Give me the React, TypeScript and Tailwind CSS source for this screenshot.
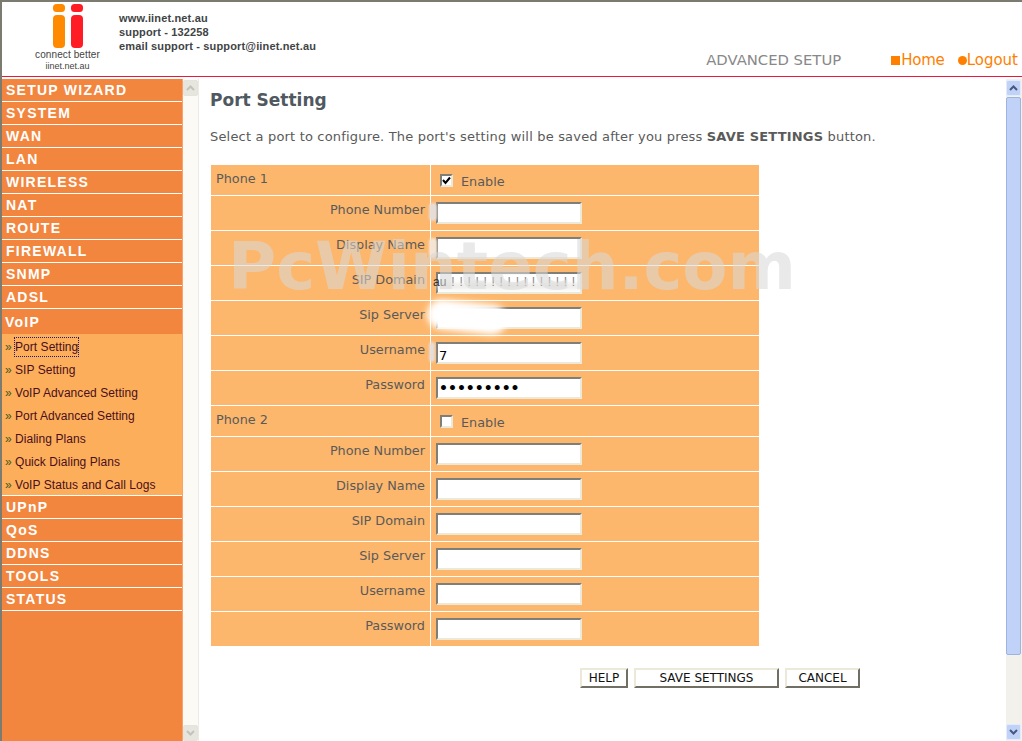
import React from 'react';

const MENU_TOP = ['SETUP WIZARD', 'SYSTEM', 'WAN', 'LAN', 'WIRELESS', 'NAT', 'ROUTE', 'FIREWALL', 'SNMP', 'ADSL'];
const MENU_BOTTOM = ['UPnP', 'QoS', 'DDNS', 'TOOLS', 'STATUS'];
const SUB_MENU = ['Port Setting', 'SIP Setting', 'VoIP Advanced Setting', 'Port Advanced Setting', 'Dialing Plans', 'Quick Dialing Plans', 'VoIP Status and Call Logs'];
const FIELDS = ['Phone Number', 'Display Name', 'SIP Domain', 'Sip Server', 'Username', 'Password'];

const inputClass =
  'block h-[22px] w-[146px] border-2 border-t-[#7f7f78] border-l-[#7f7f78] border-r-[#ece9d8] border-b-[#ece9d8] bg-white px-px text-black outline-none';

function MenuItem({ label }: { label: string }) {
  return (
    <div className="flex h-[23px] items-center border-b border-white pl-1 font-['Liberation_Sans',sans-serif] text-[14px] font-bold tracking-[1.25px] text-white">
      {label}
    </div>
  );
}

function FieldRow({ label, value, type = 'text' }: { label: string; value?: string; type?: string }) {
  return (
    <div className="flex h-[35px] border-b border-white">
      <div className="w-[220px] border-r border-white pr-[5px] pt-[5px] text-right leading-[17px]">{label}</div>
      <div className="pl-[5px] pt-[6px]">
        <input
          className={`${inputClass} ${type === 'password' ? 'text-[14px] font-bold' : 'pt-[5px] text-[13px]'}`}
          type={type}
          value={value ?? ''}
          readOnly
        />
      </div>
    </div>
  );
}

function PhoneHeader({ label, checked }: { label: string; checked: boolean }) {
  return (
    <div className="flex h-[31px] border-b border-white">
      <div className="w-[220px] border-r border-white pl-[5px] pt-[5px] leading-[17px]">{label}</div>
      <div className="flex items-start gap-[8px] pl-[9px] pt-[8px] leading-[17px]">
        <span className="mt-px flex h-[13px] w-[13px] items-center justify-center border-2 border-t-[#7f7f78] border-l-[#7f7f78] border-r-[#ece9d8] border-b-[#ece9d8] bg-white">
          {checked && (
            <svg width="9" height="9" viewBox="0 0 9 9">
              <path d="M1 4 L3.5 7 L8 1.5" fill="none" stroke="#000" strokeWidth="2" />
            </svg>
          )}
        </span>
        <span>Enable</span>
      </div>
    </div>
  );
}

function ScrollButton({ up, blue }: { up: boolean; blue: boolean }) {
  return (
    <div
      className={`flex h-[16px] w-[15px] items-center justify-center rounded-[2px] border ${
        blue ? 'border-[#e4ecfb] bg-[#c0d2f7]' : 'border-[#e4e3dc] bg-[#e6e5de]'
      }`}
    >
      <svg width="9" height="6" viewBox="0 0 9 6">
        <path
          d={up ? 'M1 5 L4.5 1.5 L8 5' : 'M1 1 L4.5 4.5 L8 1'}
          fill="none"
          stroke={blue ? '#47587f' : '#c4c3bb'}
          strokeWidth="2"
        />
      </svg>
    </div>
  );
}

function Logo() {
  return (
    <svg width="32" height="44" viewBox="0 0 32 44" className="block">
      <rect x="1" y="0" width="12" height="8" rx="3.5" fill="#ff8a00" />
      <rect x="1" y="11" width="12" height="33" rx="4" fill="#ff8a00" />
      <rect x="19" y="0" width="12" height="8" rx="3.5" fill="#ff1c24" />
      <rect x="19" y="11" width="12" height="33" rx="4" fill="#ff1c24" />
    </svg>
  );
}

export default function App() {
  return (
    <div className="flex h-[741px] w-[1022px] flex-col overflow-hidden border-t-2 border-l-2 border-[#7b7b6f] bg-white font-['DejaVu_Sans',sans-serif]">
      {/* Header */}
      <header className="flex h-[75px] shrink-0 border-b border-[#e8193c]">
        <div className="flex w-[117px] flex-col items-center pl-[14px] pt-[2px] font-['Liberation_Sans',sans-serif] text-[#444]">
          <Logo />
          <div className="text-[10px] leading-[13px] tracking-[0.1px]">connect better</div>
          <div className="text-[9px] leading-[11px]">iinet.net.au</div>
        </div>
        <div className="pt-[9px] font-['Liberation_Sans',sans-serif] text-[11px] font-bold leading-[14px] tracking-[0.15px] text-[#3f4445]">
          <div>www.iinet.net.au</div>
          <div>support - 132258</div>
          <div>email support - support@iinet.net.au</div>
        </div>
        <div className="ml-auto flex items-end gap-[13px] pb-[7px] pr-[4px] text-[15px] leading-[18px] text-[#ff8000]">
          <span className="mr-[37px] text-[14.8px] text-[#888]">ADVANCED SETUP</span>
          <span className="flex items-center tracking-[-0.2px]">
            <span className="mr-px h-[9px] w-[9px] bg-[#ff8000]" />
            Home
          </span>
          <span className="flex items-center">
            <span className="h-[9px] w-[9px] rounded-full bg-[#ff8000]" />
            Logout
          </span>
        </div>
      </header>

      <div className="mt-[2px] flex min-h-0 flex-1">
        {/* Sidebar */}
        <nav className="w-[181px] shrink-0 border-r border-[#f9a36a] bg-[#f2863f]">
          {MENU_TOP.map((m) => (
            <MenuItem key={m} label={m} />
          ))}
          <div className="flex h-[25px] items-center pl-[3px] pt-[2px] font-['Liberation_Sans',sans-serif] text-[14px] font-bold tracking-[1.25px] text-white">
            VoIP
          </div>
          <div className="border-b border-white bg-[#fdae5b] font-['Liberation_Sans',sans-serif] text-[12px] tracking-[0.05px] text-[#4a0f1c]">
            {SUB_MENU.map((s, i) => (
              <div key={s} className="flex h-[23px] items-center pl-[3px] pt-[3px]">
                <span className="w-[10px] text-[#3d5a1e]">»</span>
                <span className={i === 0 ? 'outline-1 outline-dotted outline-[#1a1a70]' : ''}>{s}</span>
              </div>
            ))}
          </div>
          {MENU_BOTTOM.map((m) => (
            <MenuItem key={m} label={m} />
          ))}
        </nav>

        {/* Sidebar scrollbar */}
        <div className="flex w-[16px] shrink-0 flex-col items-start border-r border-[#ebeae4] bg-[#fbfaf5] pt-px">
          <ScrollButton up blue={false} />
          <div className="flex-1" />
          <ScrollButton up={false} blue={false} />
        </div>

        {/* Main content */}
        <main className="relative min-w-0 flex-1 pl-[11px] text-[12.8px] text-[#5a5a5a]">
          <h1 className="pt-[11px] text-[17px] font-bold leading-[20px] text-[#505860]">Port Setting</h1>
          <p className="mt-[18px] text-[13px] leading-[17px] tracking-[0.18px]">
            Select a port to configure. The port's setting will be saved after you press <b>SAVE SETTINGS</b> button.
          </p>

          <div className="ml-px mt-[20px] w-[548px] bg-[#fdb76c]">
            <PhoneHeader label="Phone 1" checked />
            <FieldRow label={FIELDS[0]} />
            <FieldRow label={FIELDS[1]} />
            <FieldRow label={FIELDS[2]} />
            <FieldRow label={FIELDS[3]} />
            <FieldRow label={FIELDS[4]} value="7" />
            <FieldRow label={FIELDS[5]} value="123456789" type="password" />
            <PhoneHeader label="Phone 2" checked={false} />
            {FIELDS.map((f) => (
              <FieldRow key={f} label={f} />
            ))}
          </div>

          <div className="ml-[370px] mt-[21px] flex gap-[6px] text-[12px] text-[#111]">
            {[
              ['HELP', 'w-[48px]'],
              ['SAVE SETTINGS', 'w-[145px]'],
              ['CANCEL', 'w-[75px]'],
            ].map(([t, w]) => (
              <button
                key={t}
                className={`h-[20px] border-2 border-t-[#ece9d8] border-l-[#ece9d8] border-r-[#716f64] border-b-[#716f64] bg-white leading-[15px] ${w}`}
              >
                {t}
              </button>
            ))}
          </div>

          {/* scrubbed values smeared over the inputs */}
          <div className="absolute left-[230px] top-[124px] h-[18px] w-[8px] rounded-full bg-[#e6dcd8] blur-[1px]" />
          <div className="absolute left-[230px] top-[159px] h-[20px] w-[8px] rounded-full bg-[#f4e4d4] blur-[1px]" />
          <div className="absolute left-[230px] top-[263px] h-[20px] w-[6px] rounded-full bg-[#e6dcd8] blur-[1px]" />
          <div className="absolute left-[228px] top-[223px] h-[30px] w-[80px] rotate-[6deg] rounded-full bg-white blur-[3px]" />
          <div className="absolute left-[238px] top-[204px] h-[6px] w-[143px] bg-[#ecebe8] blur-[2px]" />
          <div className="absolute left-[234px] top-[194px] whitespace-nowrap font-['Liberation_Sans',sans-serif] text-[12px] text-[#333]">
            au
            <span className="ml-[5px] tracking-[4.7px] text-[#888]">!!!!!!!!!!!!!!!!</span>
          </div>

          {/* Watermark */}
          <div className="pointer-events-none absolute left-[29px] top-[147px] whitespace-nowrap text-[65.7px] font-bold leading-[80px] text-[#d8d8d890]">
            PcWintech.com
          </div>
        </main>

        {/* Page scrollbar */}
        <div className="flex w-[16px] shrink-0 flex-col bg-[#f3f1ec] py-px">
          <ScrollButton up blue />
          <div className="mt-[1px] h-[558px] w-[15px] rounded-[2px] border border-[#9db4e0] bg-[#c0d2f7]" />
          <div className="flex-1" />
          <ScrollButton up={false} blue />
        </div>
      </div>
    </div>
  );
}
